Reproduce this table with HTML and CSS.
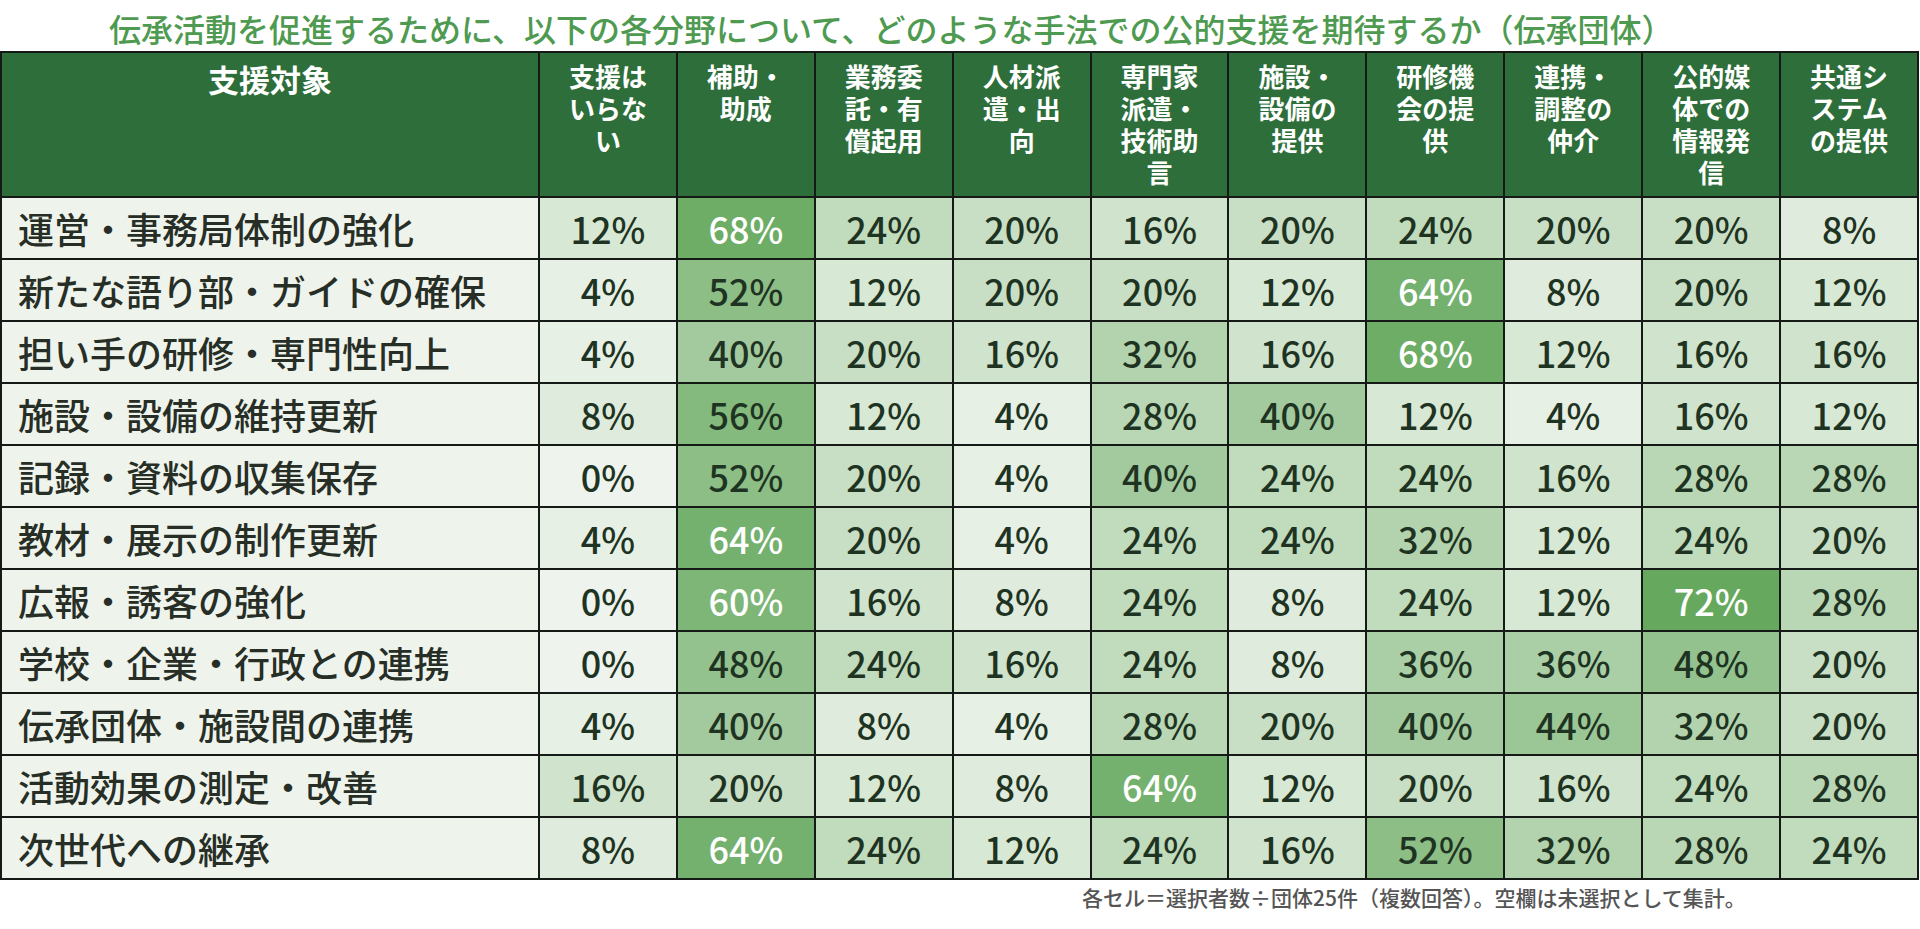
FILE: index.html
```html
<!DOCTYPE html>
<html lang="ja">
<head>
<meta charset="utf-8">
<title>伝承団体 公的支援</title>
<link rel="stylesheet" href="styles.css">
</head>
<body>
<div class="page">
  <h1 class="title">伝承活動を促進するために、以下の各分野について、どのような手法での公的支援を期待するか（伝承団体）</h1>
  <div class="grid">
    <div class="hd hd-main">支援対象</div>
    <div class="hd">支援は<br>いらな<br>い</div>
    <div class="hd">補助・<br>助成</div>
    <div class="hd">業務委<br>託・有<br>償起用</div>
    <div class="hd">人材派<br>遣・出<br>向</div>
    <div class="hd">専門家<br>派遣・<br>技術助<br>言</div>
    <div class="hd">施設・<br>設備の<br>提供</div>
    <div class="hd">研修機<br>会の提<br>供</div>
    <div class="hd">連携・<br>調整の<br>仲介</div>
    <div class="hd">公的媒<br>体での<br>情報発<br>信</div>
    <div class="hd">共通シ<br>ステム<br>の提供</div>

    <div class="lb">運営・事務局体制の強化</div>
    <div class="c p12">12%</div><div class="c p68">68%</div><div class="c p24">24%</div><div class="c p20">20%</div><div class="c p16">16%</div><div class="c p20">20%</div><div class="c p24">24%</div><div class="c p20">20%</div><div class="c p20">20%</div><div class="c p8">8%</div>

    <div class="lb">新たな語り部・ガイドの確保</div>
    <div class="c p4">4%</div><div class="c p52">52%</div><div class="c p12">12%</div><div class="c p20">20%</div><div class="c p20">20%</div><div class="c p12">12%</div><div class="c p64">64%</div><div class="c p8">8%</div><div class="c p20">20%</div><div class="c p12">12%</div>

    <div class="lb">担い手の研修・専門性向上</div>
    <div class="c p4">4%</div><div class="c p40">40%</div><div class="c p20">20%</div><div class="c p16">16%</div><div class="c p32">32%</div><div class="c p16">16%</div><div class="c p68">68%</div><div class="c p12">12%</div><div class="c p16">16%</div><div class="c p16">16%</div>

    <div class="lb">施設・設備の維持更新</div>
    <div class="c p8">8%</div><div class="c p56">56%</div><div class="c p12">12%</div><div class="c p4">4%</div><div class="c p28">28%</div><div class="c p40">40%</div><div class="c p12">12%</div><div class="c p4">4%</div><div class="c p16">16%</div><div class="c p12">12%</div>

    <div class="lb">記録・資料の収集保存</div>
    <div class="c p0">0%</div><div class="c p52">52%</div><div class="c p20">20%</div><div class="c p4">4%</div><div class="c p40">40%</div><div class="c p24">24%</div><div class="c p24">24%</div><div class="c p16">16%</div><div class="c p28">28%</div><div class="c p28">28%</div>

    <div class="lb">教材・展示の制作更新</div>
    <div class="c p4">4%</div><div class="c p64">64%</div><div class="c p20">20%</div><div class="c p4">4%</div><div class="c p24">24%</div><div class="c p24">24%</div><div class="c p32">32%</div><div class="c p12">12%</div><div class="c p24">24%</div><div class="c p20">20%</div>

    <div class="lb">広報・誘客の強化</div>
    <div class="c p0">0%</div><div class="c p60">60%</div><div class="c p16">16%</div><div class="c p8">8%</div><div class="c p24">24%</div><div class="c p8">8%</div><div class="c p24">24%</div><div class="c p12">12%</div><div class="c p72">72%</div><div class="c p28">28%</div>

    <div class="lb">学校・企業・行政との連携</div>
    <div class="c p0">0%</div><div class="c p48">48%</div><div class="c p24">24%</div><div class="c p16">16%</div><div class="c p24">24%</div><div class="c p8">8%</div><div class="c p36">36%</div><div class="c p36">36%</div><div class="c p48">48%</div><div class="c p20">20%</div>

    <div class="lb">伝承団体・施設間の連携</div>
    <div class="c p4">4%</div><div class="c p40">40%</div><div class="c p8">8%</div><div class="c p4">4%</div><div class="c p28">28%</div><div class="c p20">20%</div><div class="c p40">40%</div><div class="c p44">44%</div><div class="c p32">32%</div><div class="c p20">20%</div>

    <div class="lb">活動効果の測定・改善</div>
    <div class="c p16">16%</div><div class="c p20">20%</div><div class="c p12">12%</div><div class="c p8">8%</div><div class="c p64">64%</div><div class="c p12">12%</div><div class="c p20">20%</div><div class="c p16">16%</div><div class="c p24">24%</div><div class="c p28">28%</div>

    <div class="lb">次世代への継承</div>
    <div class="c p8">8%</div><div class="c p64">64%</div><div class="c p24">24%</div><div class="c p12">12%</div><div class="c p24">24%</div><div class="c p16">16%</div><div class="c p52">52%</div><div class="c p32">32%</div><div class="c p28">28%</div><div class="c p24">24%</div>
  </div>
  <p class="note">各セル＝選択者数÷団体25件（複数回答）。空欄は未選択として集計。</p>
</div>
</body>
</html>
```

FILE: styles.css
```css
html, body {
  margin: 0;
  padding: 0;
  background: #ffffff;
}

body {
  font-family: "Noto Sans CJK JP", "Noto Sans", sans-serif;
  color: #223322;
}

.page {
  width: 1920px;
}

.title {
  margin: 0;
  box-sizing: border-box;
  height: 51px;
  padding: 7px 0 0 109px;
  font-size: 32px;
  line-height: 42px;
  font-weight: 500;
  color: #4e9a50;
  white-space: nowrap;
}

.grid {
  display: grid;
  width: 1919px;
  box-sizing: border-box;
  grid-template-columns: 536px repeat(10, 1fr);
  grid-template-rows: 143px repeat(11, 60px);
  gap: 2px;
  padding: 2px;
  background: #161a16;
}

.hd {
  background: #2e6e3a;
  color: #ffffff;
  font-weight: 700;
  font-size: 26px;
  line-height: 32px;
  padding-top: 7px;
  text-align: center;
}

.hd-main {
  font-size: 31px;
  line-height: 36px;
  padding-top: 8px;
}

.lb {
  background: #eef3ec;
  font-size: 36px;
  font-weight: 500;
  color: #262e26;
  padding-left: 16px;
  display: flex;
  align-items: center;
  white-space: nowrap;
}

.c {
  font-size: 36px;
  font-weight: 500;
  color: #1f3322;
  display: flex;
  align-items: center;
  justify-content: center;
}

.p0  { background: rgb(238,244,237); }
.p4  { background: rgb(230,240,229); }
.p8  { background: rgb(223,236,221); }
.p12 { background: rgb(215,232,213); }
.p16 { background: rgb(208,227,205); }
.p20 { background: rgb(200,223,197); }
.p24 { background: rgb(193,219,189); }
.p28 { background: rgb(185,215,181); }
.p32 { background: rgb(178,211,173); }
.p36 { background: rgb(170,207,166); }
.p40 { background: rgb(162,202,158); }
.p44 { background: rgb(155,198,150); }
.p48 { background: rgb(147,194,142); }
.p52 { background: rgb(140,190,134); }
.p56 { background: rgb(132,186,126); }
.p60 { background: rgb(125,182,118); color: #ffffff; }
.p64 { background: rgb(117,177,110); color: #ffffff; }
.p68 { background: rgb(110,173,102); color: #ffffff; }
.p72 { background: rgb(102,169,94); color: #ffffff; }

.note {
  margin: 2px 0 0 1082px;
  font-size: 21px;
  line-height: 30px;
  font-weight: 500;
  color: #555555;
  white-space: nowrap;
}
```
